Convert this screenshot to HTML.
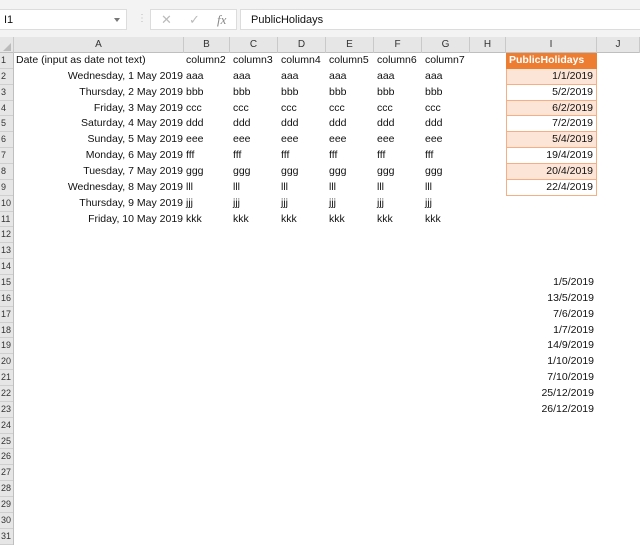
<!DOCTYPE html>
<html><head><meta charset="utf-8"><style>
*{margin:0;padding:0;box-sizing:border-box}
body{width:640px;height:546px;overflow:hidden;background:#fff;font-family:"Liberation Sans",sans-serif;font-size:10.5px;color:#111;position:relative}
.tb{position:absolute;left:0;top:0;width:640px;height:37px;background:#f3f3f3}
.nb{position:absolute;left:0;top:9px;width:127px;height:21px;background:#fff;border:1px solid #dcdcdc;border-left:none;padding:4px 4px;font-size:11px}
.nb:after{content:"";position:absolute;right:6px;top:8px;border:3px solid transparent;border-top:4px solid #777}
.fx{position:absolute;left:150px;top:9px;width:87px;height:21px;background:#fff;border:1px solid #dcdcdc;color:#bbb;font-size:13px}
.fx span{position:absolute;top:2px}
.fb{position:absolute;left:240px;top:9px;width:400px;height:21px;background:#fff;border:1px solid #dcdcdc;border-right:none;padding:4px 10px;font-size:11px}
.ch{position:absolute;top:37px;height:16px;background:#e6e6e6;border-bottom:1px solid #bfbfbf}
.ch div{position:absolute;top:0;height:16px;border-right:1px solid #c9c9c9;text-align:center;line-height:16px;font-size:10px;color:#333}
.rh{position:absolute;left:0;top:53px;width:14px;background:#e6e6e6;border-right:1px solid #bfbfbf}
.rh div{height:15.87px;border-bottom:1px solid #cfcfcf;font-size:9px;line-height:15px;padding-left:1px;color:#333;overflow:hidden}
.g{position:absolute;left:14px;top:53px;width:626px}
.r{position:relative;height:15.87px;line-height:15.87px;white-space:nowrap}
.r span{position:absolute;top:0}
.a{right:457px;text-align:right}
.i{left:492px;width:91px;text-align:right;padding-right:3px}
.p{background:#fce4d6;border:1px solid #f4b084;border-top:none;height:15.87px}
.w{background:#fff;border:1px solid #f4b084;border-top:none;height:15.87px}
</style></head><body>
<div class="tb">
<div class="nb">I1</div>
<div style="position:absolute;left:137px;top:13px;color:#bbb;font-size:10px">⋮</div>
<div class="fx"><span style="left:10px">✕</span><span style="left:38px">✓</span><span style="left:66px;font-style:italic;font-family:'Liberation Serif',serif;color:#888">fx</span></div>
<div class="fb">PublicHolidays</div>
</div>
<div class="ch" style="left:0;width:640px">
<div style="left:0;width:14px"><span style="position:absolute;right:2px;bottom:2px;border:4px solid transparent;border-right-color:#bbb;border-bottom-color:#bbb"></span></div>
<div style="left:14px;width:170px">A</div><div style="left:184px;width:46px">B</div><div style="left:230px;width:48px">C</div><div style="left:278px;width:48px">D</div><div style="left:326px;width:48px">E</div><div style="left:374px;width:48px">F</div><div style="left:422px;width:48px">G</div><div style="left:470px;width:36px">H</div><div style="left:506px;width:91px">I</div><div style="left:597px;width:43px">J</div>
</div>
<div class="rh"><div>1</div><div>2</div><div>3</div><div>4</div><div>5</div><div>6</div><div>7</div><div>8</div><div>9</div><div>10</div><div>11</div><div>12</div><div>13</div><div>14</div><div>15</div><div>16</div><div>17</div><div>18</div><div>19</div><div>20</div><div>21</div><div>22</div><div>23</div><div>24</div><div>25</div><div>26</div><div>27</div><div>28</div><div>29</div><div>30</div><div>31</div></div>
<div class="g">
<div class="r"><span style="left:2px">Date (input as date not text)</span><span style="left:172px">column2</span><span style="left:219px">column3</span><span style="left:267px">column4</span><span style="left:315px">column5</span><span style="left:363px">column6</span><span style="left:411px">column7</span><span class="i" style="background:#ed7d31;color:#fff;font-weight:bold;text-align:left;padding-left:3px;height:15.87px">PublicHolidays</span></div>
<div class="r"><span class="a">Wednesday, 1 May 2019</span><span style="left:172px">aaa</span><span style="left:219px">aaa</span><span style="left:267px">aaa</span><span style="left:315px">aaa</span><span style="left:363px">aaa</span><span style="left:411px">aaa</span><span class="i p">1/1/2019</span></div>
<div class="r"><span class="a">Thursday, 2 May 2019</span><span style="left:172px">bbb</span><span style="left:219px">bbb</span><span style="left:267px">bbb</span><span style="left:315px">bbb</span><span style="left:363px">bbb</span><span style="left:411px">bbb</span><span class="i w">5/2/2019</span></div>
<div class="r"><span class="a">Friday, 3 May 2019</span><span style="left:172px">ccc</span><span style="left:219px">ccc</span><span style="left:267px">ccc</span><span style="left:315px">ccc</span><span style="left:363px">ccc</span><span style="left:411px">ccc</span><span class="i p">6/2/2019</span></div>
<div class="r"><span class="a">Saturday, 4 May 2019</span><span style="left:172px">ddd</span><span style="left:219px">ddd</span><span style="left:267px">ddd</span><span style="left:315px">ddd</span><span style="left:363px">ddd</span><span style="left:411px">ddd</span><span class="i w">7/2/2019</span></div>
<div class="r"><span class="a">Sunday, 5 May 2019</span><span style="left:172px">eee</span><span style="left:219px">eee</span><span style="left:267px">eee</span><span style="left:315px">eee</span><span style="left:363px">eee</span><span style="left:411px">eee</span><span class="i p">5/4/2019</span></div>
<div class="r"><span class="a">Monday, 6 May 2019</span><span style="left:172px">fff</span><span style="left:219px">fff</span><span style="left:267px">fff</span><span style="left:315px">fff</span><span style="left:363px">fff</span><span style="left:411px">fff</span><span class="i w">19/4/2019</span></div>
<div class="r"><span class="a">Tuesday, 7 May 2019</span><span style="left:172px">ggg</span><span style="left:219px">ggg</span><span style="left:267px">ggg</span><span style="left:315px">ggg</span><span style="left:363px">ggg</span><span style="left:411px">ggg</span><span class="i p">20/4/2019</span></div>
<div class="r"><span class="a">Wednesday, 8 May 2019</span><span style="left:172px">lll</span><span style="left:219px">lll</span><span style="left:267px">lll</span><span style="left:315px">lll</span><span style="left:363px">lll</span><span style="left:411px">lll</span><span class="i w">22/4/2019</span></div>
<div class="r"><span class="a">Thursday, 9 May 2019</span><span style="left:172px">jjj</span><span style="left:219px">jjj</span><span style="left:267px">jjj</span><span style="left:315px">jjj</span><span style="left:363px">jjj</span><span style="left:411px">jjj</span></div>
<div class="r"><span class="a">Friday, 10 May 2019</span><span style="left:172px">kkk</span><span style="left:219px">kkk</span><span style="left:267px">kkk</span><span style="left:315px">kkk</span><span style="left:363px">kkk</span><span style="left:411px">kkk</span></div>
<div class="r"></div><div class="r"></div><div class="r"></div>
<div class="r"><span class="i">1/5/2019</span></div>
<div class="r"><span class="i">13/5/2019</span></div>
<div class="r"><span class="i">7/6/2019</span></div>
<div class="r"><span class="i">1/7/2019</span></div>
<div class="r"><span class="i">14/9/2019</span></div>
<div class="r"><span class="i">1/10/2019</span></div>
<div class="r"><span class="i">7/10/2019</span></div>
<div class="r"><span class="i">25/12/2019</span></div>
<div class="r"><span class="i">26/12/2019</span></div>
</div>
</body></html>
